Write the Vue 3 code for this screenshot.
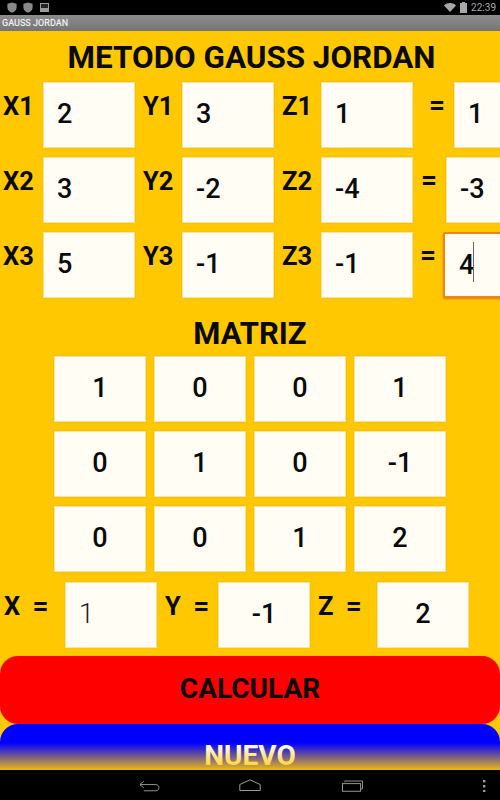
<script setup>
const equations = [
  { id: 1, x: '2', y: '3', z: '1', r: '1', eq: 'eq-wide' },
  { id: 2, x: '3', y: '-2', z: '-4', r: '-3', eq: '' },
  { id: 3, x: '5', y: '-1', z: '-1', r: '4', eq: 'eq-narrow', focus: true }
]
const matrix = ['1','0','0','1','0','1','0','-1','0','0','1','2']
</script>

<template>
  <div class="screen">
    <div class="status">
      <div class="status-left">
        <svg class="shield" viewBox="0 0 10 11"><path d="M5 .5 9.6 1.8V5.5C9.6 8 7.6 9.9 5 10.7 2.4 9.9.4 8 .4 5.5V1.8Z" fill="#8a8a8a"/></svg>
        <svg class="shield" viewBox="0 0 10 11"><path d="M5 .5 9.6 1.8V5.5C9.6 8 7.6 9.9 5 10.7 2.4 9.9.4 8 .4 5.5V1.8Z" fill="#8a8a8a"/></svg>
        <svg class="pic" viewBox="0 0 9 9"><rect width="9" height="9" fill="#9a9a9a"/><rect x="1" y="1" width="7" height="4" fill="#222"/></svg>
      </div>
      <div class="status-right">
        <svg class="wifi" viewBox="0 0 12 9"><path d="M0 2.4C3.5-.8 8.5-.8 12 2.4L6 9Z" fill="#a8a8a8"/></svg>
        <svg class="battery" viewBox="0 0 7 11"><path d="M2 0H5V1H7V11H0V1H2Z" fill="#a8a8a8"/></svg>
        <span class="clock">22:39</span>
      </div>
    </div>
    <div class="titlebar">GAUSS JORDAN</div>

    <main class="content">
      <h1 class="title">METODO GAUSS JORDAN</h1>

      <div class="equations">
        <div v-for="e in equations" :key="e.id" class="eq-row">
          <span class="label l-x">X{{ e.id }}</span>
          <div class="box left">{{ e.x }}</div>
          <span class="label l-yz">Y{{ e.id }}</span>
          <div class="box left">{{ e.y }}</div>
          <span class="label l-yz">Z{{ e.id }}</span>
          <div class="box left">{{ e.z }}</div>
          <span class="label equal" :class="e.eq">=</span>
          <div class="box left" :class="{ focus: e.focus }">{{ e.r }}<i v-if="e.focus" class="caret"></i></div>
        </div>
      </div>

      <h2 class="subtitle">MATRIZ</h2>

      <div class="matrix">
        <div v-for="(v, i) in matrix" :key="i" class="box center">{{ v }}</div>
      </div>

      <div class="results">
        <span class="label r-x">X <b class="sign">=</b></span>
        <div class="box left thin">1</div>
        <span class="label r-y">Y <b class="sign">=</b></span>
        <div class="box center">-1</div>
        <span class="label r-z">Z <b class="sign">=</b></span>
        <div class="box center">2</div>
      </div>

      <button class="btn red">CALCULAR</button>
      <button class="btn blue">NUEVO</button>
      <div class="fade"></div>
    </main>

    <nav class="navbar">
      <svg class="back" viewBox="0 0 22 12"><path d="M5 1 1 4.5 5 8M1 4.5H17.5C22 4.5 22 11 17.5 11H5" fill="none" stroke="#9a9a9a" stroke-width="1"/></svg>
      <svg class="home" viewBox="0 0 22 12"><path d="M.8 11.5V5.5L11 .8 21.2 5.5V11.5Z" fill="none" stroke="#9a9a9a" stroke-width="1"/></svg>
      <svg class="recent" viewBox="0 0 22 12"><path d="M3 2V.8H21.5V9H20" fill="none" stroke="#9a9a9a" stroke-width="1"/><rect x=".5" y="3.5" width="19" height="8" fill="none" stroke="#9a9a9a" stroke-width="1"/></svg>
      <svg class="dots" viewBox="0 0 4 12"><rect x="1" y="0" width="2.4" height="2.4" fill="#9a9a9a"/><rect x="1" y="5" width="2.4" height="2.4" fill="#9a9a9a"/><rect x="1" y="10" width="2.4" height="2.4" fill="#9a9a9a"/></svg>
    </nav>
  </div>
</template>

<style scoped>
.screen {
  width: 500px;
  height: 800px;
  display: flex;
  flex-direction: column;
  overflow: hidden;
  font-family: Roboto, "Liberation Sans", sans-serif;
  color: #0a0a0a;
}
.status {
  height: 15px;
  flex: none;
  background: #000;
  display: flex;
  justify-content: space-between;
  align-items: center;
  padding: 0 4px 0 7px;
}
.status-left, .status-right { display: flex; align-items: center; }
.shield { width: 10px; height: 11px; margin-right: 6px; }
.pic { width: 9px; height: 9px; margin-left: 1px; }
.wifi { width: 12px; height: 9px; margin-right: 4px; }
.battery { width: 7px; height: 11px; margin-right: 4px; }
.clock { font-size: 10px; color: #a8a8a8; }
.titlebar {
  height: 16px;
  flex: none;
  box-sizing: border-box;
  padding-left: 2px;
  background: linear-gradient(#8c8c8c, #757575);
  color: #f0f0f0;
  font-size: 9px;
  font-weight: 500;
  line-height: 16px;
}
.content {
  position: relative;
  height: 739px;
  flex: none;
  background: #ffc800;
  overflow: hidden;
}
.title {
  margin: 0;
  height: 51px;
  padding-top: 9px;
  box-sizing: border-box;
  text-align: center;
  font-size: 31.4px;
  line-height: 36px;
  font-weight: 700;
  padding-left: 3px;
  white-space: nowrap;
}
.equations {
  display: flex;
  flex-direction: column;
  gap: 9px;
}
.eq-row { display: flex; height: 66px; }
.label {
  flex: none;
  font-size: 25.5px;
  font-weight: 700;
  line-height: 30px;
  padding-top: 9px;
  box-sizing: border-box;
  word-spacing: 6px;
  white-space: nowrap;
}
.sign { font-size: 28px; font-weight: 700; }
.l-x { width: 43px; padding-left: 3px; }
.l-yz { width: 47px; padding-left: 8px; }
.equal { width: 33px; padding-left: 8px; font-size: 28px; padding-top: 8px; }
.eq-wide { width: 41px; padding-left: 16px; }
.eq-narrow { width: 30px; padding-left: 7px; }
.box {
  width: 92px;
  height: 66px;
  flex: none;
  box-sizing: border-box;
  background: #fffdf4;
  border: 1px solid #f6e3a6;
  box-shadow: 0 0 1px #d9a200;
  font-size: 27px;
  font-weight: 500;
  line-height: 62px;
  position: relative;
}
.left { padding-left: 13px; }
.center { text-align: center; }
.focus {
  border: 2px solid #f0861a;
  border-radius: 2px;
  box-shadow: 0 1px 2px #e07a10;
  padding-left: 14px;
}
.caret {
  position: absolute;
  left: 28px;
  top: 8px;
  width: 1px;
  height: 40px;
  background: #666;
}
.thin { font-weight: 300; color: #222; }
.subtitle {
  margin: 0;
  height: 58px;
  padding-top: 20px;
  box-sizing: border-box;
  text-align: center;
  font-size: 31px;
  line-height: 32px;
  font-weight: 700;
}
.matrix {
  display: grid;
  grid-template-columns: repeat(4, 92px);
  gap: 9px 8px;
  grid-auto-rows: 66px;
  padding-left: 54px;
}
.results {
  display: flex;
  height: 66px;
  margin-top: 10px;
}
.r-x { width: 65px; padding-left: 4px; }
.r-y { width: 61px; padding-left: 8px; }
.r-z { width: 67px; padding-left: 8px; }
.btn {
  display: block;
  width: 500px;
  border: 0;
  font-family: inherit;
  font-size: 28px;
  font-weight: 700;
  text-align: center;
}
.red {
  height: 68px;
  margin-top: 8px;
  padding: 0 0 3px;
  border-radius: 18px;
  background: #ff0000;
  color: #0a0a0a;
}
.blue {
  height: 67px;
  padding: 0 0 5px;
  border-radius: 18px;
  background: #0000ff;
  color: #fff;
}
.fade {
  position: absolute;
  left: 0;
  right: 0;
  bottom: 0;
  height: 27px;
  background: linear-gradient(rgba(255,200,0,0), rgba(255,200,0,.92));
}
.navbar {
  height: 30px;
  flex: none;
  background: #000;
  position: relative;
}
.navbar svg { position: absolute; }
.back { left: 139px; top: 10px; width: 21px; height: 12px; }
.home { left: 239px; top: 9px; width: 22px; height: 12px; }
.recent { left: 342px; top: 10px; width: 21px; height: 12px; }
.dots { left: 482px; top: 10px; width: 4px; height: 12px; }
</style>
